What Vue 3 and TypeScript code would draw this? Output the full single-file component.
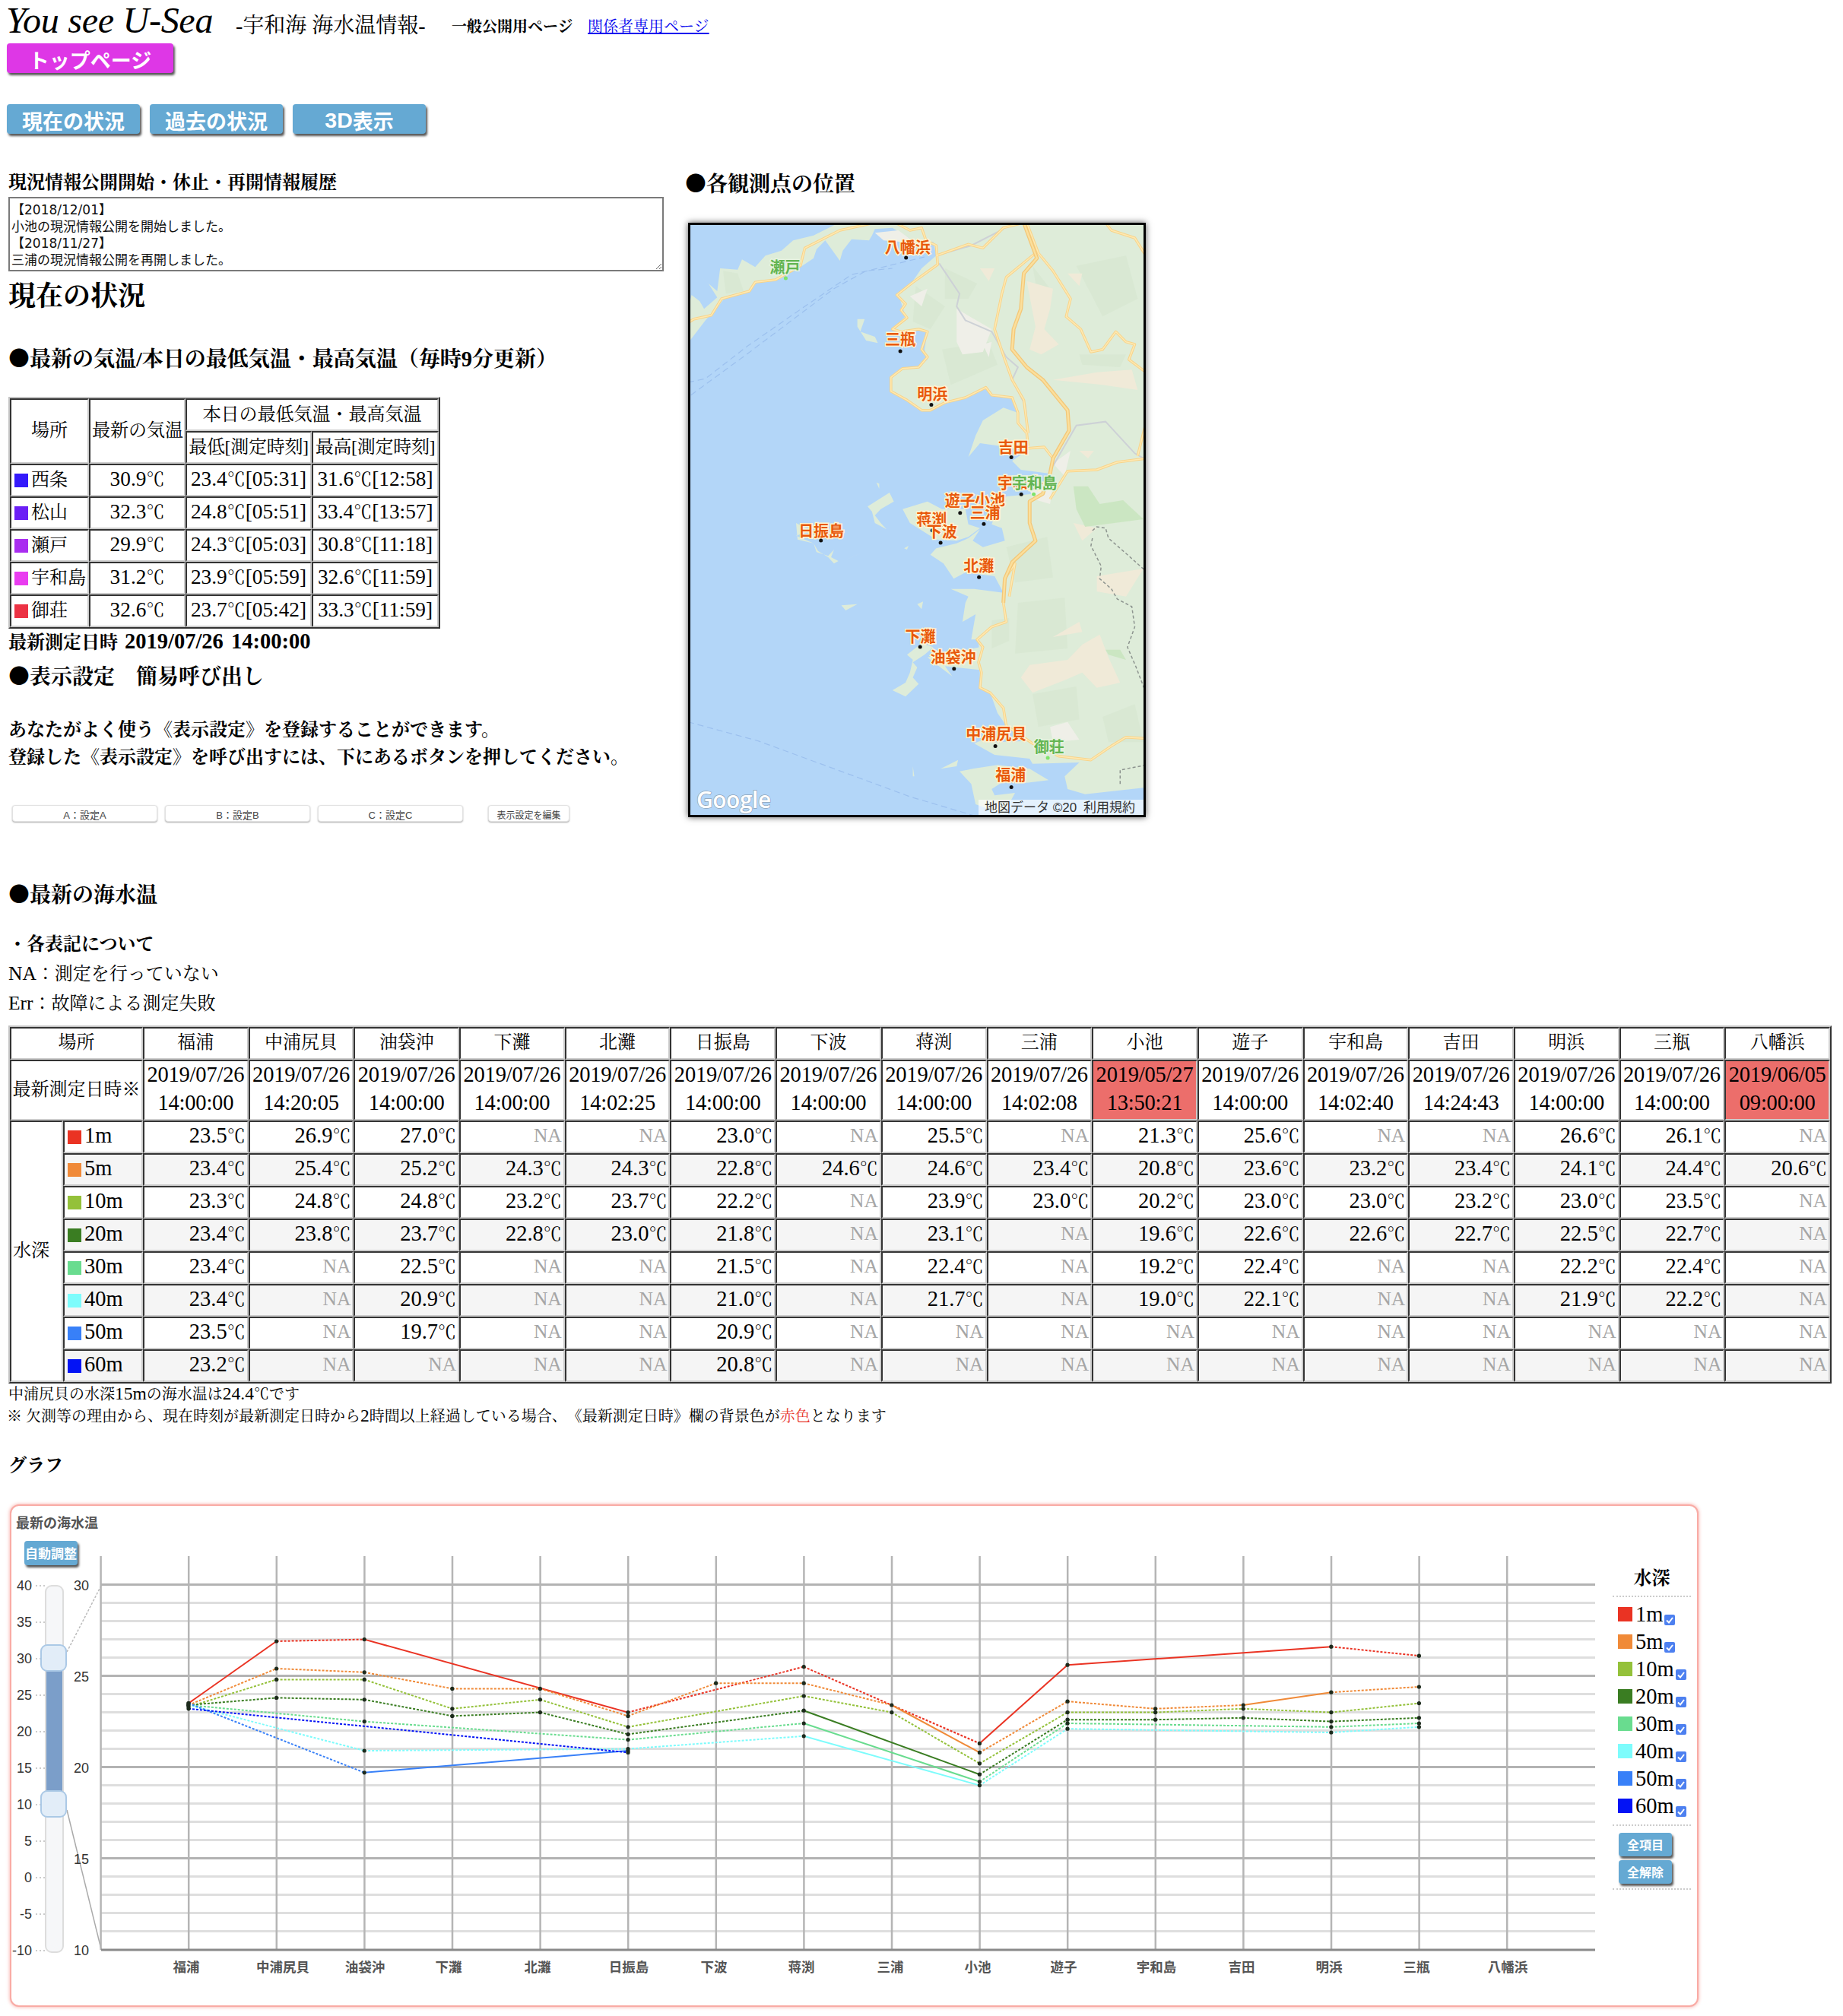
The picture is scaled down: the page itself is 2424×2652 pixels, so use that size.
<template>
  <div class="page">
    <div class="head">
      <span class="logo">You see U-Sea</span>
      <span class="sub">-宇和海 海水温情報-</span>
      <span class="kind">一般公開用ページ</span>
      <a class="rel">関係者専用ページ</a>
    </div>
    <div class="btn top-btn">トップページ</div>
    <div class="nav">
      <div class="btn nav-btn">現在の状況</div>
      <div class="btn nav-btn">過去の状況</div>
      <div class="btn nav-btn"><span class="n">3D</span>表示</div>
    </div>

    <div class="main">
      <div class="left">
        <div class="hist-title">現況情報公開開始・休止・再開情報履歴</div>
        <textarea class="hist" readonly :value="historyText"></textarea>
        <div class="now-title">現在の状況</div>
        <div class="h3 air-title"><span class="dot">●</span>最新の気温/本日の最低気温・最高気温（毎時<span class="n">9</span>分更新）</div>

        <table class="tbl air">
          <colgroup>
            <col style="width: 104px" /><col style="width: 127px" /><col style="width: 166px" /><col style="width: 167px" />
          </colgroup>
          <tbody>
            <tr>
              <td rowspan="2" class="c">場所</td>
              <td rowspan="2" class="c">最新の気温</td>
              <td colspan="2" class="c">本日の最低気温・最高気温</td>
            </tr>
            <tr>
              <td class="c tight">最低[測定時刻]</td>
              <td class="c tight">最高[測定時刻]</td>
            </tr>
            <tr v-for="row in airRows" :key="row.name">
              <td><span class="swatch" :style="{ background: row.color }"></span>{{ row.name }}</td>
              <td class="c"><span class="n">{{ row.now }}</span>℃</td>
              <td class="c"><span class="n">{{ row.low }}</span>℃<span class="n">[{{ row.lowAt }}]</span></td>
              <td class="c"><span class="n">{{ row.high }}</span>℃<span class="n">[{{ row.highAt }}]</span></td>
            </tr>
          </tbody>
        </table>

        <div class="latest">最新測定日時 <span class="n">2019/07/26 14:00:00</span></div>
        <div class="h3 preset-title"><span class="dot">●</span>表示設定　簡易呼び出し</div>
        <p class="preset-text">
          あなたがよく使う《表示設定》を登録することができます。<br />
          登録した《表示設定》を呼び出すには、下にあるボタンを押してください。
        </p>
        <div class="presets">
          <div class="preset">A：設定A</div>
          <div class="preset">B：設定B</div>
          <div class="preset">C：設定C</div>
          <div class="preset edit">表示設定を編集</div>
        </div>
      </div>

      <div class="right">
        <div class="h3 map-title"><span class="dot">●</span>各観測点の位置</div>
        <div class="map">
          <svg class="map-base" viewBox="8 9 1552 2328" preserveAspectRatio="none">
            <rect x="0" y="0" width="1600" height="2400" fill="#b3d6f8" />
            <polygon v-for="(p, i) in landShapes" :key="'l' + i" :points="p" fill="#deecd9" />
            <polygon v-for="(p, i) in shades" :key="'s' + i" :points="p" fill="#d2e5cd" opacity="0.45" />
            <polygon v-for="(p, i) in bare" :key="'b' + i" :points="p" fill="#efefe8" />
            <polygon v-for="(p, i) in hills" :key="'h' + i" :points="p" fill="#f0ead8" />
            <polygon v-for="(p, i) in greens" :key="'g' + i" :points="p" fill="#c8e5bd" opacity="0.85" />
            <polyline v-for="(p, i) in ferries" :key="'f' + i" :points="p" fill="none" stroke="#9cc0ee" stroke-width="1.2" stroke-dasharray="8 5" vector-effect="non-scaling-stroke" />
            <polyline v-for="(p, i) in trails" :key="'t' + i" :points="p" fill="none" stroke="#8d948f" stroke-width="1.5" stroke-dasharray="4 3" vector-effect="non-scaling-stroke" />
            <polyline v-for="(p, i) in grayRoads" :key="'r' + i" :points="p" fill="none" stroke="#cdd1d6" stroke-width="2" vector-effect="non-scaling-stroke" />
            <polyline v-for="(p, i) in roads" :key="'o' + i" :points="p" fill="none" stroke="#f8d48a" stroke-width="3.5" stroke-linejoin="round" vector-effect="non-scaling-stroke" />
            <polyline v-for="(p, i) in roads" :key="'y' + i" :points="p" fill="none" stroke="#fee9b3" stroke-width="1.5" stroke-linejoin="round" vector-effect="non-scaling-stroke" />
            <polyline :points="highway" fill="none" stroke="#f3c778" stroke-width="5" stroke-linejoin="round" vector-effect="non-scaling-stroke" />
            <polyline :points="highway" fill="none" stroke="#fbdf9c" stroke-width="2.5" stroke-linejoin="round" vector-effect="non-scaling-stroke" />
          </svg>
          <svg class="map-over" viewBox="0 0 596 776">
            <g v-for="m in markers" :key="m.name + m.dx">
              <text class="pin" :class="{ green: m.green }" :x="(m.lx - 69) / 2.376" :y="(m.ly - 170) / 1.742 + 7" text-anchor="middle">{{ m.name }}</text>
              <circle :cx="(m.dx - 69) / 2.376" :cy="(m.dy - 170) / 1.742" r="2.5" :fill="m.green ? '#7fe36a' : '#111'" />
            </g>
            <text class="google" x="8" y="767">Google</text>
            <rect x="379" y="756" width="217" height="20" fill="#fff" opacity="0.65" />
            <text class="attr" x="387" y="772">地図データ ©20</text>
            <text class="attr" x="517" y="772">利用規約</text>
          </svg>
        </div>
      </div>
    </div>

    <div class="h3 sea-title"><span class="dot">●</span>最新の海水温</div>
    <div class="legend-title">・各表記について</div>
    <div class="abbr"><span class="m">NA</span>：測定を行っていない</div>
    <div class="abbr"><span class="m">Err</span>：故障による測定失敗</div>

    <table class="tbl sea">
      <colgroup>
        <col style="width: 70px" /><col style="width: 105px" />
        <col v-for="l in locations" :key="l" style="width: 138.7px" />
      </colgroup>
      <tbody>
        <tr>
          <td colspan="2" class="c">場所</td>
          <td v-for="l in locations" :key="l" class="c">{{ l }}</td>
        </tr>
        <tr class="dates">
          <td colspan="2" class="c">最新測定日時※</td>
          <td v-for="(d, i) in measured" :key="i" class="c" :class="{ stale: d.stale }">
            <span class="n nar">{{ d.date }}</span><br /><span class="n nar">{{ d.time }}</span>
          </td>
        </tr>
        <tr v-for="(s, r) in series" :key="s.label" :class="{ odd: r % 2 === 1 }">
          <td v-if="r === 0" rowspan="8" class="depth">水深</td>
          <td class="depth-name"><span class="swatch" :style="{ background: s.color }"></span><span class="n">{{ s.label }}</span></td>
          <td v-for="(v, i) in s.values" :key="i" class="val">
            <template v-if="v !== null"><span class="n">{{ v.toFixed(1) }}</span>℃</template>
            <span v-else class="na">NA</span>
          </td>
        </tr>
      </tbody>
    </table>

    <div class="note1">中浦尻貝の水深<span class="m">15m</span>の海水温は<span class="m">24.4</span>℃です</div>
    <div class="note2">※ 欠測等の理由から、現在時刻が最新測定日時から<span class="m">2</span>時間以上経過している場合、《最新測定日時》欄の背景色が<span class="red">赤色</span>となります</div>
    <div class="graph-title">グラフ</div>

    <div class="card">
      <svg class="plot" viewBox="15 1980 2106 657">
        <text class="chart-title" x="21" y="2009">最新の海水温</text>

        <!-- range slider -->
        <g v-for="(t, i) in sliderTicks" :key="t">
          <text class="tick" x="42" :y="2091 + i * 48" text-anchor="end">{{ t }}</text>
          <line x1="47" x2="60" :y1="2085 + i * 48" :y2="2085 + i * 48" stroke="#ccc" stroke-width="2" stroke-dasharray="2 3" />
        </g>
        <rect x="60" y="2085" width="23" height="482" rx="8" fill="#f6f7f9" stroke="#ddd" stroke-width="2" />
        <rect x="61" y="2196" width="21" height="160" fill="#7b9ec9" />
        <line x1="88" y1="2172" x2="133" y2="2085" stroke="#bbb" stroke-width="1.5" stroke-dasharray="3 2" />
        <line x1="88" y1="2380" x2="133" y2="2563" stroke="#aaa" stroke-width="1.5" />
        <rect x="54" y="2163" width="33" height="34" rx="8" fill="#e2edf8" stroke="#abc9e6" stroke-width="2" />
        <rect x="54" y="2355" width="33" height="34" rx="8" fill="#e2edf8" stroke="#abc9e6" stroke-width="2" />

        <!-- grid -->
        <line v-for="g in gridH" :key="'h' + g.y" x1="133" x2="2098" :y1="g.y" :y2="g.y" :stroke="g.major ? '#b3b3b3' : '#dedede'" stroke-width="3" />
        <line v-for="x in gridV" :key="'v' + x" :x1="x" :x2="x" y1="2046" y2="2564" stroke="#b5b5b5" stroke-width="2.5" />
        <line x1="133" x2="2098" y1="2564" y2="2564" stroke="#8a8a8a" stroke-width="3" />
        <text v-for="(a, i) in axisTicks" :key="a" class="tick" x="117" :y="2091 + i * 120" text-anchor="end">{{ a }}</text>

        <!-- series -->
        <g v-for="s in chartLines" :key="s.label">
          <line v-for="(seg, i) in s.segs" :key="i" :x1="seg.x1" :y1="seg.y1" :x2="seg.x2" :y2="seg.y2" :stroke="s.color" stroke-width="2" :stroke-dasharray="seg.solid ? undefined : '3 2'" />
          <circle v-for="(p, i) in s.points" :key="'p' + i" :cx="p.x" :cy="p.y" r="2.6" fill="#1c2a1c" />
        </g>
        <text v-for="(l, i) in locations" :key="l" class="cat" :x="catX[i]" y="2593" text-anchor="middle">{{ l }}</text>
      </svg>

      <div class="btn auto-btn">自動調整</div>

      <div class="legend">
        <div class="legend-head">水深</div>
        <div class="legend-items">
          <div v-for="s in series" :key="s.label" class="legend-item">
            <span class="lg-swatch" :style="{ background: s.color }"></span>
            <span class="lg-label n">{{ s.label }}</span>
            <span class="check">
              <svg viewBox="0 0 14 14" width="14" height="14"><path d="M3 7.5 L6 10.5 L11 4" fill="none" stroke="#fff" stroke-width="2" /></svg>
            </span>
          </div>
        </div>
        <div class="legend-btns">
          <div class="btn small-btn">全項目</div>
          <div class="btn small-btn">全解除</div>
        </div>
      </div>
    </div>
  </div>
</template>

<script setup lang="ts">
import { computed } from 'vue'

const historyText = '【2018/12/01】\n小池の現況情報公開を開始しました。\n【2018/11/27】\n三浦の現況情報公開を再開しました。'

const airRows = [
  { name: '西条', color: '#3419fb', now: '30.9', low: '23.4', lowAt: '05:31', high: '31.6', highAt: '12:58' },
  { name: '松山', color: '#6b1ff5', now: '32.3', low: '24.8', lowAt: '05:51', high: '33.4', highAt: '13:57' },
  { name: '瀬戸', color: '#a92df0', now: '29.9', low: '24.3', lowAt: '05:03', high: '30.8', highAt: '11:18' },
  { name: '宇和島', color: '#e93cf0', now: '31.2', low: '23.9', lowAt: '05:59', high: '32.6', highAt: '11:59' },
  { name: '御荘', color: '#ec3244', now: '32.6', low: '23.7', lowAt: '05:42', high: '33.3', highAt: '11:59' }
]

const locations = ['福浦', '中浦尻貝', '油袋沖', '下灘', '北灘', '日振島', '下波', '蒋渕', '三浦', '小池', '遊子', '宇和島', '吉田', '明浜', '三瓶', '八幡浜']
const catX = [245, 372, 480, 590, 707, 827, 939, 1054, 1171, 1286, 1399, 1521, 1633, 1748, 1863, 1983]

const times = ['14:00:00', '14:20:05', '14:00:00', '14:00:00', '14:02:25', '14:00:00', '14:00:00', '14:00:00', '14:02:08', '13:50:21', '14:00:00', '14:02:40', '14:24:43', '14:00:00', '14:00:00', '09:00:00']
const measured = times.map((time, i) => {
  if (i === 9) return { date: '2019/05/27', time, stale: true }
  if (i === 15) return { date: '2019/06/05', time, stale: true }
  return { date: '2019/07/26', time, stale: false }
})

const _ = null
const series: { label: string; color: string; values: (number | null)[]; solidFrom: number[] }[] = [
  { label: '1m', color: '#ea3323', solidFrom: [0, 2, 9, 10], values: [23.5, 26.9, 27.0, _, _, 23.0, _, 25.5, _, 21.3, 25.6, _, _, 26.6, 26.1, _] },
  { label: '5m', color: '#f08a38', solidFrom: [8, 12], values: [23.4, 25.4, 25.2, 24.3, 24.3, 22.8, 24.6, 24.6, 23.4, 20.8, 23.6, 23.2, 23.4, 24.1, 24.4, 20.6] },
  { label: '10m', color: '#94c13a', solidFrom: [], values: [23.3, 24.8, 24.8, 23.2, 23.7, 22.2, _, 23.9, 23.0, 20.2, 23.0, 23.0, 23.2, 23.0, 23.5, _] },
  { label: '20m', color: '#3a7d22', solidFrom: [7], values: [23.4, 23.8, 23.7, 22.8, 23.0, 21.8, _, 23.1, _, 19.6, 22.6, 22.6, 22.7, 22.5, 22.7, _] },
  { label: '30m', color: '#69dc8f', solidFrom: [7], values: [23.4, _, 22.5, _, _, 21.5, _, 22.4, _, 19.2, 22.4, _, _, 22.2, 22.4, _] },
  { label: '40m', color: '#7dfcfc', solidFrom: [7], values: [23.4, _, 20.9, _, _, 21.0, _, 21.7, _, 19.0, 22.1, _, _, 21.9, 22.2, _] },
  { label: '50m', color: '#3880f8', solidFrom: [2], values: [23.5, _, 19.7, _, _, 20.9, _, _, _, _, _, _, _, _, _, _] },
  { label: '60m', color: '#0313f5', solidFrom: [], values: [23.2, _, _, _, _, 20.8, _, _, _, _, _, _, _, _, _, _] }
]

const sliderTicks = [40, 35, 30, 25, 20, 15, 10, 5, 0, -5, -10]
const axisTicks = [30, 25, 20, 15, 10]

const gridH = Array.from({ length: 20 }, (_v, i) => ({ y: 2083.6 + i * 24, major: i % 5 === 0 }))
const gridV = Array.from({ length: 17 }, (_v, i) => 132.6 + i * 115.6)

const chartLines = computed(() =>
  series.map((s) => {
    const points: { x: number; y: number; i: number }[] = []
    s.values.slice(0, 15).forEach((v, i) => {
      if (v !== null) points.push({ x: 248 + i * 115.6, y: 2563.6 - (v - 10) * 24, i })
    })
    const segs = points.slice(1).map((p, n) => {
      const prev = points[n]
      return { x1: prev.x, y1: prev.y, x2: p.x, y2: p.y, solid: s.solidFrom.includes(prev.i) }
    })
    return { label: s.label, color: s.color, points, segs }
  })
)

// map outlines, traced in a 1568 x 2346 space laid over the map
const landShapes = [
  '0,345 12,285 40,310 55,340 100,295 70,240 45,215 100,270 110,180 170,185 185,145 230,175 265,130 320,110 360,70 395,60 430,50 500,10 520,0 1600,0 1600,2225 1360,2255 1300,2235 1290,2185 1340,2130 1180,2135 1170,2115 1050,2100 980,2055 1000,2045 1060,2050 1160,2045 1090,1985 1060,1935 1035,1855 1000,1835 1000,1795 995,1645 970,1645 985,1545 940,1575 950,1500 960,1475 900,1445 980,1445 1080,1460 1050,1395 950,1380 910,1405 875,1345 830,1310 850,1285 920,1265 960,1245 1000,1210 975,1255 1010,1280 1085,1255 1075,1205 1040,1190 1060,1130 1090,1080 1140,1075 1180,1070 1240,1040 1240,990 1140,975 1110,940 1160,900 1060,880 1000,870 960,925 985,840 1010,780 1080,730 1130,750 1110,690 1040,680 1020,650 950,690 880,710 830,740 800,745 750,700 695,660 695,610 730,580 790,570 820,540 810,500 820,430 790,420 730,440 700,420 745,370 720,280 770,230 800,180 850,130 840,75 770,70 700,20 640,25 630,50 620,70 560,65 530,110 520,150 470,70 440,105 430,140 385,175 300,225 225,235 210,270 130,290 110,320 60,385 0,475',
  '930,2165 975,2155 1060,2140 1170,2155 1235,2200 1160,2210 1080,2205 1040,2235 1050,2260 1120,2250 1080,2335 985,2295 970,2215',
  '580,380 605,380 590,430 640,450 650,475 610,465 580,410',
  '645,1025 655,1030 655,1050',
  '615,1120 690,1065 705,1100 660,1130 640,1155 660,1185 680,1210 640,1185 630,1140',
  '735,1130 820,1100 870,1130 950,1130 960,1190 1000,1205 960,1240 920,1255 850,1250 760,1185',
  '370,1185 420,1215 370,1235 430,1265 445,1295 480,1320 500,1345 515,1335 490,1320 500,1290 480,1315 440,1300 430,1265 375,1250',
  '540,1330 600,1300 560,1320',
  '525,1510 580,1505 540,1530',
  '785,1505 805,1495 800,1525',
  '740,1285 755,1275 750,1290',
  '750,1705 800,1660 840,1675 810,1705 770,1735 785,1755 770,1795 790,1820 745,1870 700,1845 745,1815 760,1775 770,1725',
  '820,1715 1000,1675 1000,1765 880,1750 905,1790',
  '865,2155 925,2120 920,2145',
  '770,2145 775,2185 770,2185'
]
const shades = [
  '120,190 170,200 190,270 130,280',
  '880,180 990,240 960,300 880,300',
  '780,250 880,330 830,420 770,390',
  '1180,170 1240,260 1200,300',
  '1330,170 1500,130 1540,300 1420,370',
  '1340,520 1500,520 1480,570 1350,560',
  '870,500 1030,470 1060,560 900,640',
  '1090,1280 1230,1240 1250,1400 1120,1420',
  '1130,1500 1290,1480 1300,1680 1120,1700',
  '1040,1570 1100,1560 1100,1650 1040,1680',
  '1180,1860 1330,1830 1340,1960 1200,1990',
  '1420,1950 1530,1900 1560,2050 1440,2050'
]
const bare = [
  '920,340 1040,420 1010,510 940,520 920,470',
  '760,290 820,260 800,330',
  '640,40 720,30 780,80 670,70',
  '1250,950 1310,900 1290,1000',
  '1170,1050 1250,1030 1240,1110 1180,1090',
  '1240,1990 1300,1970 1340,2040 1250,2050',
  '1010,480 1040,470 1030,530'
]
const hills = [
  '1160,230 1250,260 1240,340 1220,420 1270,480 1210,520 1170,500 1190,410',
  '1250,620 1400,590 1520,580 1540,660 1420,640',
  '1000,180 1050,180 1030,230',
  '1170,1745 1300,1725 1350,1665 1410,1625 1440,1715 1480,1815 1400,1835 1350,1775 1290,1805 1180,1855 1140,1795',
  '1400,1395 1560,1365 1500,1475 1400,1455',
  '1250,1635 1340,1575 1350,1615',
  '1320,1185 1400,1205 1350,1255',
  '1300,200 1350,200 1340,250',
  '1340,900 1390,900 1370,930'
]
const greens = [
  '1320,1040 1370,1040 1410,1110 1490,1095 1560,1170 1360,1200 1330,1130',
  '1430,1685 1480,1685 1500,1725 1440,1705'
]
const ferries = [
  '0,630 60,615 200,490 400,330 560,205 810,135',
  '10,680 200,520 500,260 610,190 700,180',
  '0,1970 240,2045 560,2180 760,2265 980,2340'
]
const trails = [
  '1385,1215 1400,1200 1430,1205 1440,1245 1500,1305 1568,1375',
  '1385,1245 1380,1275 1415,1355 1410,1405 1450,1445 1470,1485 1520,1515 1530,1595 1505,1675 1535,1755 1568,1855',
  '1480,2215 1480,2160 1568,2140'
]
const grayRoads = [
  '860,160 930,280 920,330 950,385 1040,430 1090,530 1130,570 1110,620 1155,720 1165,830',
  '1250,960 1330,800 1430,785 1530,910 1568,935',
  '850,130 970,90 1080,25'
]
const highway = '1150,0 1195,140 1150,200 1140,340 1115,420 1110,500 1160,570 1215,620 1300,740 1305,820 1250,930 1240,990 1215,1070 1170,1100 1170,1185 1190,1255 1110,1340 1085,1405 1080,1500'
const roads = [
  '0,395 20,380 80,365 115,300 210,270 230,235 300,225 385,170 400,100 520,30 600,10 640,0',
  '710,0 760,30 800,20 815,70 850,90 855,165 770,235 715,285 745,320 730,345 750,375 700,420 730,430 790,420 820,430 800,500 820,530 790,570 735,575 695,610 695,665 750,700 800,740 830,740 880,710 950,690 1020,650 1040,680 1110,690 1130,750 1130,790 1160,830 1165,880',
  '850,130 960,85 1010,100 1080,20 1150,0',
  '1080,1500 1090,1575 1040,1595 990,1645 1010,1675 995,1735 1005,1775 1000,1835 1035,1855 1080,1915 1090,1985 1180,2055 1270,2105 1380,2120 1450,2065 1500,2030 1568,2035',
  '1160,0 1200,120 1250,190 1310,300 1295,370 1345,420 1380,510 1420,500 1465,430 1500,470 1530,480 1510,540 1568,590',
  '1190,120 1090,215 1075,280 1050,420 1085,540 1110,620 1150,700 1165,830',
  '1430,0 1450,30 1530,60 1568,130',
  '1165,890 1220,885 1250,930',
  '1240,1090 1300,980 1400,975 1470,945 1568,930',
  '1085,1405 1120,1345 1100,1475',
  '1568,790 1540,920'
]

const markers = [
  { name: '瀬戸', lx: 365, ly: 267, dx: 367, dy: 292, green: true },
  { name: '八幡浜', lx: 748, ly: 222, dx: 743, dy: 245 },
  { name: '三瓶', lx: 725, ly: 433, dx: 725, dy: 459 },
  { name: '明浜', lx: 825, ly: 558, dx: 822, dy: 582 },
  { name: '吉田', lx: 1078, ly: 680, dx: 1072, dy: 702 },
  { name: '宇和島', lx: 1100, ly: 763, dx: 1103, dy: 787 },
  { name: '宇和島', lx: 1145, ly: 763, dx: 1142, dy: 787, green: true },
  { name: '遊子', lx: 912, ly: 803, dx: 912, dy: 830 },
  { name: '小池', lx: 1005, ly: 800, dx: 1000, dy: 825 },
  { name: '三浦', lx: 990, ly: 830, dx: 986, dy: 855 },
  { name: '蒋渕', lx: 823, ly: 846, dx: 825, dy: 870 },
  { name: '下波', lx: 855, ly: 874, dx: 851, dy: 898 },
  { name: '日振島', lx: 478, ly: 872, dx: 477, dy: 893 },
  { name: '北灘', lx: 970, ly: 952, dx: 971, dy: 977 },
  { name: '下灘', lx: 788, ly: 1114, dx: 787, dy: 1137 },
  { name: '油袋沖', lx: 890, ly: 1162, dx: 893, dy: 1187 },
  { name: '中浦尻貝', lx: 1025, ly: 1337, dx: 1022, dy: 1364 },
  { name: '御荘', lx: 1190, ly: 1367, dx: 1186, dy: 1391, green: true },
  { name: '福浦', lx: 1070, ly: 1432, dx: 1072, dy: 1458 }
]
</script>

<style>
body {
  margin: 0;
  background: #fff;
}
</style>

<style scoped>
.page {
  width: 2424px;
  height: 2652px;
  box-sizing: border-box;
  padding-left: 11px;
  overflow: hidden;
  font-family: "Liberation Serif", "Noto Serif CJK JP", "Noto Sans CJK JP", serif;
  font-size: 24px;
  color: #000;
  background: #fff;
  text-spacing-trim: space-all;
}

.n {
  font-size: 28.5px;
}

.m {
  font-size: 25.5px;
}

.note1 .m,
.note2 .m {
  font-size: 23.5px;
}

.dot {
  font-family: "Noto Serif CJK JP", "Noto Sans CJK JP", serif;
}

.nar {
  letter-spacing: -0.2px;
}

.head {
  height: 53px;
  margin-left: -3px;
  display: flex;
  align-items: flex-end;
}

.logo {
  align-self: flex-start;
  margin-top: 3px;
  font-size: 48px;
  font-style: italic;
  line-height: 47px;
  width: 302px;
  letter-spacing: -0.26px;
}

.sub {
  font-size: 28px;
  line-height: 38px;
  width: 284px;
}

.kind {
  font-size: 20px;
  font-weight: bold;
  line-height: 36px;
  width: 179px;
}

.rel {
  font-size: 20px;
  line-height: 36px;
  color: #0000ee;
  text-decoration: underline;
}

.btn {
  display: flex;
  align-items: center;
  justify-content: center;
  box-sizing: border-box;
  color: #fff;
  font-family: "Liberation Sans", "Noto Sans CJK JP", sans-serif;
  font-weight: bold;
  border-radius: 4px;
  background: #65a9d3;
  box-shadow: 2px 3px 3px #555;
}

.top-btn {
  width: 219px;
  height: 39px;
  padding-top: 3px;
  margin: 4px 0 0 -2px;
  font-size: 27px;
  background: #de37e6;
}

.nav {
  display: flex;
  gap: 13px;
  margin: 41px 0 0 -2px;
}

.nav-btn {
  width: 175px;
  height: 39px;
  padding-top: 3px;
  font-size: 27px;
}

.main {
  display: flex;
  margin-top: 50px;
}

.left {
  width: 890px;
}

.hist-title {
  font-weight: bold;
  line-height: 28px;
}

.hist {
  display: block;
  width: 862px;
  height: 98px;
  box-sizing: border-box;
  margin-top: 5px;
  padding: 4px 2px;
  border: 2px solid #7a7a7a;
  border-radius: 0;
  overflow: hidden;
  font-family: "DejaVu Sans", "Noto Sans CJK JP", sans-serif;
  font-size: 17px;
  line-height: 22px;
  color: #111;
  outline: none;
}

.now-title {
  margin-top: 11px;
  font-size: 36px;
  font-weight: bold;
  line-height: 44px;
}

.h3 {
  height: 36px;
  font-size: 28px;
  font-weight: bold;
  line-height: 36px;
}

.air-title {
  margin-top: 40px;
}

.tbl {
  border-collapse: separate;
  border-spacing: 0;
  table-layout: fixed;
  border: 2px solid;
  border-color: #c4c4c4 #333 #333 #c4c4c4;
}

.tbl td {
  box-sizing: border-box;
  border: 2px solid;
  border-color: #333 #ccc #ccc #333;
  padding: 0 2px 2px;
  height: 43px;
  line-height: 36px;
  white-space: nowrap;
  overflow: hidden;
}

.tbl .c {
  text-align: center;
}

.tbl .tight {
  padding: 0 0 2px;
  letter-spacing: -0.3px;
}

.air {
  width: 566px;
  margin-top: 34px;
}

.air .n {
  font-size: 27.3px;
}

.swatch {
  display: inline-block;
  width: 18px;
  height: 18px;
  margin: 0 4px 0 2px;
  vertical-align: -2px;
}

.latest {
  height: 30px;
  margin-top: 2px;
  font-weight: bold;
  line-height: 30px;
  word-spacing: 3px;
}

.preset-title {
  margin-top: 11px;
}

.preset-text {
  margin: 36px 0 0;
  font-weight: bold;
  line-height: 36.4px;
}

.presets {
  display: flex;
  margin: 44px 0 0 5px;
  gap: 10px;
  font-family: "Liberation Sans", "Noto Sans CJK JP", sans-serif;
  font-size: 13px;
  color: #444;
}

.preset {
  width: 191px;
  height: 22px;
  box-sizing: border-box;
  padding-top: 5px;
  line-height: 16px;
  text-align: center;
  background: #fff;
  border: 1px solid #e2e2e2;
  border-radius: 4px;
  box-shadow: 0 1px 2px #aaa;
}

.preset.edit {
  width: 107px;
  margin-left: 23px;
  font-size: 12px;
}

.right {
  width: 620px;
}

.map-title {
  height: 29px;
  line-height: 29px;
}

.map {
  position: relative;
  width: 602px;
  height: 782px;
  box-sizing: border-box;
  margin: 38px 0 0 4px;
  border: 3px solid #000;
  box-shadow: 0 0 8px #555;
}

.map-base,
.map-over {
  position: absolute;
  left: 0;
  top: 0;
  width: 596px;
  height: 776px;
}

.pin {
  font-family: "Liberation Sans", "Noto Sans CJK JP", sans-serif;
  font-size: 20px;
  font-weight: bold;
  fill: #e8590c;
  stroke: #fff3d0;
  stroke-width: 3px;
  paint-order: stroke;
}

.pin.green {
  fill: #63b552;
  stroke: #e6f3df;
}

.google {
  font-family: "Open Sans", sans-serif;
  font-size: 30px;
  font-weight: 600;
  letter-spacing: -0.5px;
  fill: #fff;
  stroke: rgba(110, 120, 130, 0.55);
  stroke-width: 1.5px;
  paint-order: stroke;
}

.attr {
  font-family: "Liberation Sans", "Noto Sans CJK JP", sans-serif;
  font-size: 17px;
  fill: #333;
}

.sea-title {
  margin-top: 76px;
}

.legend-title {
  height: 30px;
  margin-top: 34px;
  font-weight: bold;
  line-height: 30px;
}

.abbr {
  height: 39px;
  line-height: 39px;
}

.legend-title + .abbr {
  margin-top: 4px;
}

.sea {
  width: 2398px;
  margin-top: 10px;
}

.dates td {
  height: 79px;
  padding: 0 0 2px;
}

.odd td:not(.depth) {
  background: #f5f5f5;
}

.depth {
  background: #fff;
}

.val {
  text-align: right;
}

.na {
  color: #a6a6a6;
  font-size: 25.5px;
}

.stale {
  background: #ec6e6b;
}

.note1 {
  height: 26px;
  font-size: 20px;
  line-height: 26px;
}

.note2 {
  height: 30px;
  font-size: 20px;
  line-height: 30px;
  margin-top: 1px;
  margin-left: -2px;
}

.red {
  color: #e8362a;
}

.graph-title {
  height: 30px;
  margin-top: 36px;
  font-weight: bold;
  line-height: 30px;
}

.card {
  position: relative;
  display: flex;
  width: 2221px;
  height: 661px;
  box-sizing: border-box;
  margin: 36px 0 0 2px;
  border: 2px solid #f9aba5;
  border-radius: 12px;
  box-shadow: 0 0 5px #f7a7a0;
  background: #fff;
}

.plot {
  width: 2106px;
  height: 657px;
  flex: none;
}

.plot text {
  font-family: "Liberation Sans", "Noto Sans CJK JP", sans-serif;
}

.chart-title {
  font-size: 18px;
  font-weight: bold;
  fill: #555;
}

.tick {
  font-size: 18px;
  fill: #333;
}

.cat {
  font-size: 17.5px;
  font-weight: bold;
  fill: #555;
}

.auto-btn {
  position: absolute;
  left: 17px;
  top: 46px;
  width: 70px;
  height: 32px;
  font-size: 17px;
}

.legend {
  width: 103px;
  flex: none;
  padding-top: 78px;
}

.legend-head {
  height: 42px;
  line-height: 34px;
  text-align: center;
  font-weight: bold;
  border-bottom: 2px dotted #ccc;
  box-sizing: border-box;
}

.legend-items {
  padding: 5px 0 6px 7px;
  border-bottom: 2px dotted #ccc;
}

.legend-item {
  display: flex;
  align-items: center;
  height: 36px;
}

.lg-swatch {
  width: 19px;
  height: 19px;
}

.lg-label {
  margin-left: 4px;
}

.check {
  display: flex;
  width: 14px;
  height: 14px;
  margin: 14px 0 0 2px;
  background: #4d80f0;
  border-radius: 2px;
}

.legend-btns {
  padding: 9px 0 6px 8px;
  border-bottom: 2px dotted #ccc;
}

.small-btn {
  width: 70px;
  height: 31px;
  font-size: 16px;
  margin-bottom: 5px;
}

.small-btn:last-child {
  margin-bottom: 0;
}
</style>
